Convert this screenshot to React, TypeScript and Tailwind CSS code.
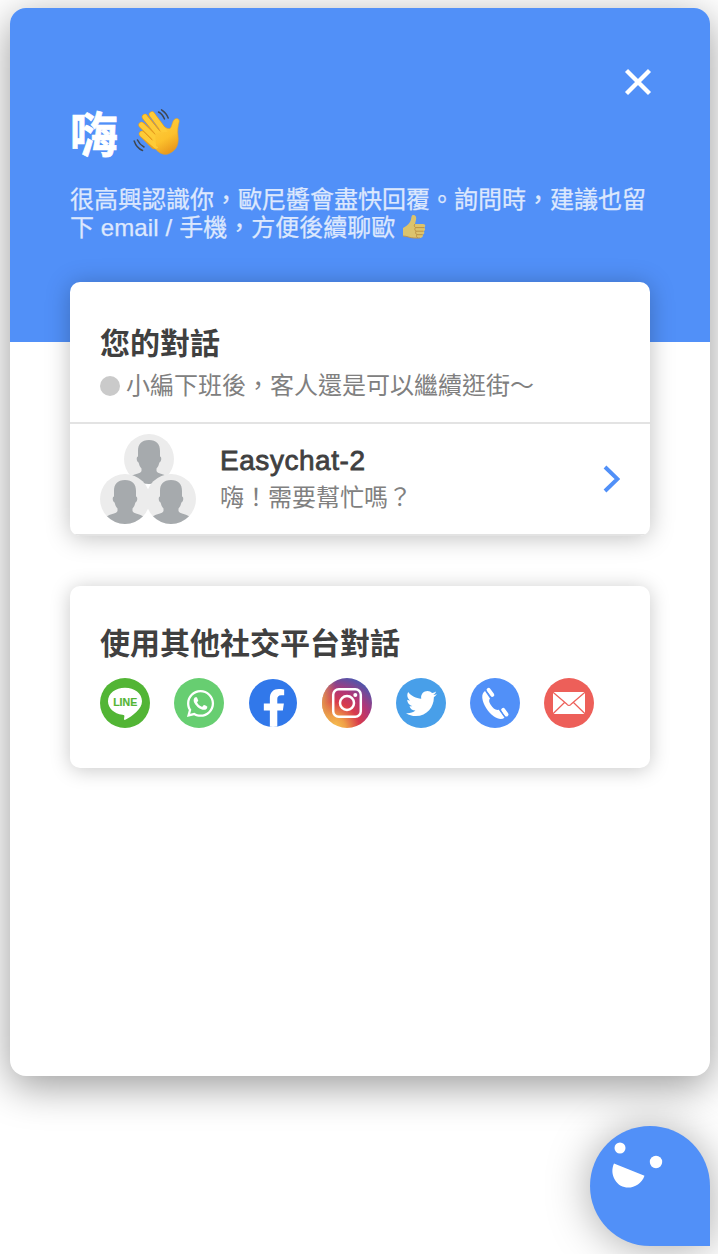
import React from "react";
import { FaFacebookF, FaTwitter, FaWhatsapp } from "react-icons/fa";

function WaveIcon() {
  return (
    <svg width="50" height="50" viewBox="0 0 50 50" fill="none" aria-label="wave">
      <defs>
        <linearGradient id="skin" x1="10" y1="5" x2="36" y2="48" gradientUnits="userSpaceOnUse">
          <stop offset="0" stopColor="#ffd54a" />
          <stop offset="0.65" stopColor="#fcc12c" />
          <stop offset="1" stopColor="#e58e18" />
        </linearGradient>
      </defs>
      <g stroke="#e9a21f" strokeLinecap="round">
        <path d="M12 8 L27 27 M19 5.500 L32 23 M8.500 16 L25 32 M9 25 L21 37" strokeWidth="6.200" />
      </g>
      <path
        d="M20 37 C25 44 31 47 36 44.500 C43 41.500 46 36 45 27 C44.300 22 45 17 46.200 12.500 C46.600 8.500 41.500 8.500 40 12.500 C38.800 15.500 38.500 18 37 19.500 C34 20.500 31 17 29 17 L19 29 Z"
        fill="url(#skin)" stroke="#e5a122" strokeWidth=".6"
      />
      <g stroke="#fecb37" strokeLinecap="round" strokeWidth="5">
        <path d="M12 8 L28 28" />
        <path d="M19 5.500 L34 26" />
        <path d="M8.500 16 L26 33" />
        <path d="M9 25 L23 37" />
      </g>
      <path d="M22 24 L42 22 L43 34 L33 43 L23 37Z" fill="url(#skin)" />
      <path d="M14.500 6.800 L27 22 M11 14 L22 25 M10 22 L19 31" stroke="#e79d20" strokeWidth="1" strokeLinecap="round" />
      <path d="M25.500 3 Q29.500 5 31.500 10 M28.500 .8 Q33.500 4 35.200 9 M1.200 32 Q3.500 39 9.500 41.500 M4.500 31 Q6.500 35.500 11 38" stroke="#3f4650" strokeWidth="1.500" strokeLinecap="round" />
    </svg>
  );
}

function ThumbIcon() {
  return (
    <svg className="inline-block align-[-3px]" width="24" height="25" viewBox="0 0 24 25" aria-label="thumb up">
      <path d="M1 14 C4 12.500 6 11 8 8 C9.500 6 9 3 10 1.500 C12 .2 14.600 1.600 14.200 5 L13 10 H21 C24 10 23.700 13.300 22 13.600 C23.800 14.500 23.300 17 21.600 17.200 C23 18.300 22.300 20.600 20.600 20.600 C21.600 22.300 20.300 24 18.300 24 H12 C8 24 5 22 1 22 Z" fill="#ffd04a" />
      <path d="M13 10 C12 11 12 12.500 13.500 13.600 H22 M13.500 13.600 C12.400 15 12.800 16.600 14 17.200 H21.500 M14 17.200 C13.300 18.500 13.600 20 15 20.700 H20.600 M15 20.700 C14 22 14.500 23.300 16 24" fill="none" stroke="#d48c12" strokeWidth=".9" />
      <path d="M1 22 C5 22 8 24 12 24 H18" fill="none" stroke="#d8952a" strokeWidth="1" />
    </svg>
  );
}

function Avatar({ className }: { className: string }) {
  return (
    <svg className={className} width="50" height="50" viewBox="0 0 50 50">
      <circle cx="25" cy="25" r="25" fill="#ececec" />
      <path
        d="M25 6 C32.500 6 36 10 36 17 V22.500 C38 22.500 37.500 28 35.400 28.500 C34.800 31 34 33 32.500 34.500 V37 C33.500 39.800 39.500 39.800 43 42.350 A25 25 0 0 1 7 42.350 C10.500 39.800 16.500 39.800 17.500 37 V34.500 C16 33 15.200 31 14.600 28.500 C12.500 28 12 22.500 14 22.500 V17 C14 10 17.500 6 25 6Z"
        fill="#a6aaad"
      />
    </svg>
  );
}

function LineIcon() {
  return (
    <svg width="50" height="50" viewBox="0 0 50 50">
      <circle cx="25" cy="25" r="25" fill="#52b535" />
      <path d="M25 9.800 C34.500 9.800 42 15.600 42 23.200 C42 31 32.500 38 25.300 41.800 C23.600 42.500 24 40.500 24.300 39 C24.700 37.300 24 37 22.500 36.800 C14 35.700 8 30 8 23.200 C8 15.600 15.500 9.800 25 9.800Z" fill="white" />
      <text x="25.200" y="28" textAnchor="middle" textLength="24" lengthAdjust="spacingAndGlyphs" fill="#52b535" stroke="#52b535" strokeWidth=".2" className="font-['Liberation_Sans',sans-serif] text-[11.500px] font-bold">LINE</text>
    </svg>
  );
}

function InstagramIcon() {
  return (
    <svg width="50" height="50" viewBox="0 0 50 50">
      <defs>
        <radialGradient id="ig" cx="10" cy="52" r="56" gradientUnits="userSpaceOnUse">
          <stop offset="0" stopColor="#f8cf55" />
          <stop offset=".25" stopColor="#f0a047" />
          <stop offset=".5" stopColor="#d93b4b" />
          <stop offset=".72" stopColor="#b03678" />
          <stop offset="1" stopColor="#4c56ad" />
        </radialGradient>
        <linearGradient id="igEdge" x1="0" x2="1">
          <stop offset="0" stopColor="#e5b04d" stopOpacity=".8" />
          <stop offset=".28" stopColor="#e5904d" stopOpacity="0" />
        </linearGradient>
      </defs>
      <circle cx="25" cy="25" r="25" fill="url(#ig)" />
      <circle cx="25" cy="25" r="25" fill="url(#igEdge)" />
      <g fill="none" stroke="white" strokeWidth="2.500">
        <rect x="11.200" y="11.200" width="27.600" height="27.600" rx="5.500" />
        <circle cx="25" cy="25" r="7" />
      </g>
      <circle cx="33.300" cy="16.900" r="2" fill="white" />
    </svg>
  );
}

function PhoneIcon() {
  return (
    <svg width="50" height="50" viewBox="0 0 50 50">
      <circle cx="25" cy="25" r="25" fill="#5190f8" />
      <path d="M15 13 L20 20.500 C18.600 22 19 24 20.500 26.500 C23 30.500 25.500 32.500 28.800 31.800 L34.500 39.700 C32 41.700 28 41.300 24 38.500 C18 34 13 26.500 12.300 20 C12 16.500 13 14.300 15 13Z" fill="white" />
      <path d="M18.600 11.800 L22.300 16.900 M33.200 31.800 L36.500 36.500" stroke="white" strokeWidth="4" strokeLinecap="round" />
      <path d="M15.700 12.200 L21 20 M29.600 31.400 L35.200 39.300" stroke="#5190f8" strokeWidth="1" />
    </svg>
  );
}

function MailIcon() {
  return (
    <svg width="50" height="50" viewBox="0 0 50 50">
      <circle cx="25" cy="25" r="25" fill="#ed5f59" />
      <rect x="9" y="14" width="32" height="22" fill="white" />
      <path d="M9 14.300 L23 26.300 Q25 28.500 27 26.300 L41 14.300 M9 35.700 L20.500 24.500 M41 35.700 L29.500 24.500" fill="none" stroke="#ed5f59" strokeWidth="1.200" />
    </svg>
  );
}

export default function App() {
  return (
    <div
      lang="zh-Hant"
      className="flex h-[1254px] w-[718px] flex-col items-end overflow-hidden bg-white pt-2 pr-2 font-['Liberation_Sans','Noto_Sans_CJK_TC',sans-serif]"
    >
      <main className="h-[1068px] w-[700px] shrink-0 overflow-hidden rounded-2xl bg-white shadow-[0_10px_40px_rgba(0,0,0,0.4)]">
        <header className="flex h-[334px] flex-col bg-[#5190f8] px-[60px] pt-[60px] text-white">
          <button className="mr-[-2px] flex h-7 w-7 items-center justify-center self-end" aria-label="close">
            <svg width="28" height="28" viewBox="0 0 28 28">
              <path d="M2.500 2.500 L25.500 25.500 M25.500 2.500 L2.500 25.500" stroke="white" strokeWidth="4.300" />
            </svg>
          </button>
          <div className="mt-[13px] flex h-[50px] items-center gap-[15px]">
            <h1 className="pt-[3px] text-[48px] leading-[50px] font-bold [-webkit-text-stroke:0.7px_white]">嗨</h1>
            <WaveIcon />
          </div>
          <p className="-mr-2 mt-[27px] text-2xl leading-7 whitespace-nowrap opacity-80 [-webkit-text-stroke:0.25px_white]">
            很高興認識你，歐尼醬會盡快回覆。詢問時，建議也留
            <br />
            下 <span className="tracking-[0.14px]">email / </span>手機，方便後續聊歐 <ThumbIcon />
          </p>
        </header>

        <div className="relative -mt-[60px] flex flex-col gap-[50px] px-[60px]">
          <section className="h-[254px] overflow-hidden rounded-[10px] bg-white shadow-[0_2px_24px_rgba(0,0,0,0.25)]">
            <div className="h-[142px] border-b-2 border-[#e3e3e3] px-[30px] pt-[44px]">
              <h2 className="text-[30px] leading-9 font-bold text-[#404040]">您的對話</h2>
              <div className="mt-[10px] flex h-7 items-center gap-[6px] text-2xl text-[#808080]">
                <span className="h-5 w-5 rounded-full bg-[#cacaca]" />
                <span className="whitespace-nowrap">小編下班後，客人還是可以繼續逛街～</span>
              </div>
            </div>
            <div className="flex h-[112px] items-center border-b-2 border-[#e3e3e3] px-[30px]">
              <div className="flex h-[90px] w-24 flex-col items-center">
                <Avatar className="ml-[2px] shrink-0" />
                <div className="-mt-[10px] flex">
                  <Avatar className="shrink-0" />
                  <Avatar className="-ml-1 shrink-0" />
                </div>
              </div>
              <div className="mt-[1px] ml-6 flex-1">
                <h3 className="text-[28px] leading-8 tracking-[0.55px] text-[#404040] [-webkit-text-stroke:0.8px_#404040]">Easychat-2</h3>
                <p className="mt-[5px] text-2xl leading-8 text-[#808080]">嗨！需要幫忙嗎？</p>
              </div>
              <svg width="18" height="28" viewBox="0 0 18 28">
                <path d="M3 2 L15.500 14 L3 26" fill="none" stroke="#5190f8" strokeWidth="4" />
              </svg>
            </div>
          </section>

          <section className="h-[182px] rounded-[10px] bg-white px-[30px] pt-[40px] shadow-[0_2px_20px_rgba(0,0,0,0.22)]">
            <h2 className="text-[30px] leading-9 font-bold text-[#404040]">使用其他社交平台對話</h2>
            <div className="mt-[16px] flex gap-6">
              <LineIcon />
              <span className="flex h-[50px] w-[50px] items-center justify-center rounded-full bg-[#67ce71]">
                <FaWhatsapp size={31} color="white" className="ml-[2px]" />
              </span>
              <span className="flex h-[50px] w-[50px] items-center justify-center">
                <span className="flex h-[48px] w-[48px] items-end justify-center overflow-hidden rounded-full bg-[#3178ea]">
                  <FaFacebookF size={38} color="white" className="ml-[2px] shrink-0" />
                </span>
              </span>
              <InstagramIcon />
              <span className="flex h-[50px] w-[50px] items-center justify-center rounded-full bg-[#489fe9]">
                <FaTwitter size={31} color="white" />
              </span>
              <PhoneIcon />
              <MailIcon />
            </div>
          </section>
        </div>
      </main>

      <button className="mt-[50px] h-[120px] w-[120px] shrink-0 rounded-[60px_60px_0_60px] bg-[#5190f8] shadow-[0_2px_44px_rgba(0,0,0,0.34)]" aria-label="chat">
        <svg width="120" height="120" viewBox="0 0 120 120" fill="white">
          <circle cx="30" cy="22" r="5.500" />
          <circle cx="66" cy="36" r="6.200" />
          <path d="M24 37.500 L54.500 49.700 C50 63 32 66 25 54 C22 49 21.500 43 24 37.500Z" />
        </svg>
      </button>
    </div>
  );
}
